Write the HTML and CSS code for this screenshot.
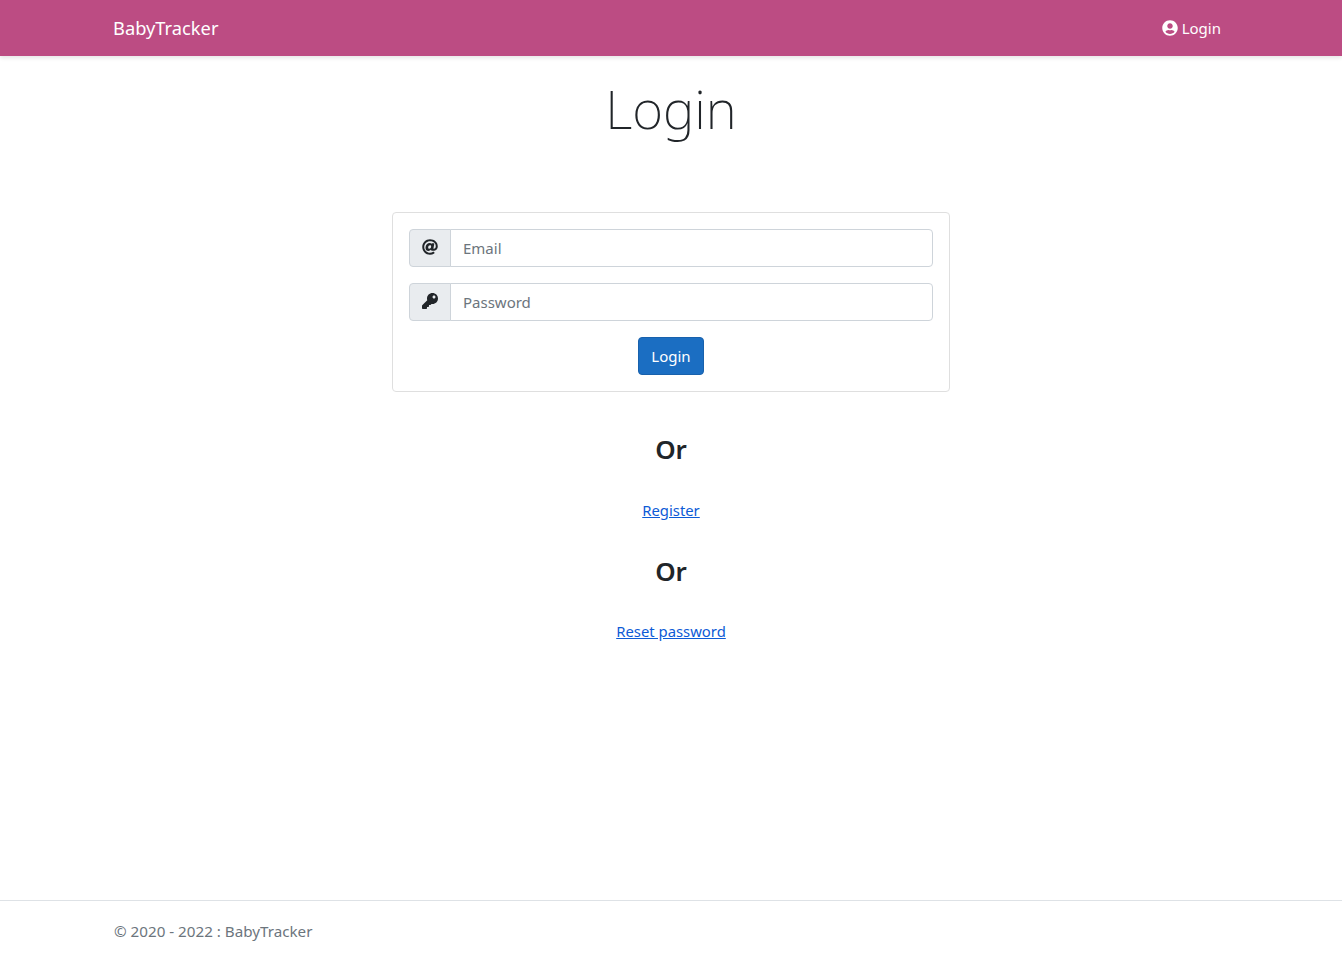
FILE: index.html
```html
<!DOCTYPE html>
<html lang="en">
<head>
<meta charset="utf-8">
<title>Login - BabyTracker</title>
<link rel="stylesheet" href="styles.css">
</head>
<body>
<nav class="navbar">
  <div class="container nav-inner">
    <a class="brand" href="#">BabyTracker</a>
    <a class="nav-link" href="#">
      <svg class="icon" viewBox="0 0 496 512" aria-hidden="true"><path d="M248 8C111 8 0 119 0 256s111 248 248 248 248-111 248-248S385 8 248 8zm0 96c48.6 0 88 39.4 88 88s-39.4 88-88 88-88-39.4-88-88 39.4-88 88-88zm0 344c-58.7 0-111.3-26.6-146.5-68.2 18.8-35.4 55.6-59.8 98.5-59.8 2.4 0 4.8.4 7.1 1.1 13 4.2 26.6 6.9 40.9 6.9 14.3 0 28-2.7 40.9-6.9 2.3-.7 4.7-1.1 7.1-1.1 42.9 0 79.7 24.4 98.5 59.8C359.3 421.4 306.7 448 248 448z"/></svg>
      Login
    </a>
  </div>
</nav>
<main class="main">
  <h1 class="title">Login</h1>
  <form class="card">
    <div class="input-group">
      <span class="addon"><svg class="icon" viewBox="0 0 512 512" aria-hidden="true"><path d="M256 8C118.941 8 8 118.919 8 256c0 137.059 110.919 248 248 248 48.154 0 95.342-14.14 135.408-40.223 12.005-7.815 14.625-24.288 5.552-35.372l-10.177-12.433c-7.671-9.371-21.179-11.667-31.373-5.129C325.92 429.757 291.314 440 256 440c-101.458 0-184-82.542-184-184S154.542 72 256 72c100.139 0 184 57.619 184 160 0 38.786-21.093 79.742-58.17 83.693-17.349-.454-16.91-12.857-13.476-30.024l23.433-121.11C394.653 149.75 383.308 136 368.225 136h-44.981a13.518 13.518 0 0 0-13.432 11.993l-.01.092c-14.697-17.901-40.448-21.775-59.971-21.775-74.58 0-137.831 62.234-137.831 151.46 0 65.303 36.785 105.87 96 105.87 26.984 0 57.369-15.637 74.991-38.333 9.522 34.104 40.613 34.103 70.71 34.103C462.609 379.41 504 307.798 504 232 504 95.653 394.023 8 256 8zm-21.68 304.43c-22.249 0-36.07-15.623-36.07-40.771 0-44.993 30.779-72.729 58.63-72.729 22.292 0 35.601 15.241 35.601 40.77 0 45.061-33.875 72.73-58.161 72.73z"/></svg></span>
      <input class="control" type="email" placeholder="Email">
    </div>
    <div class="input-group">
      <span class="addon"><svg class="icon" viewBox="0 0 512 512" aria-hidden="true"><path d="M512 176.001C512 273.203 433.202 352 336 352c-11.22 0-22.19-1.062-32.827-3.069l-24.012 27.014A23.999 23.999 0 0 1 261.223 384H224v40c0 13.255-10.745 24-24 24h-40v40c0 13.255-10.745 24-24 24H24c-13.255 0-24-10.745-24-24v-78.059c0-6.365 2.529-12.47 7.029-16.971l161.802-161.802C163.108 213.814 160 195.271 160 176 160 78.797 238.797.001 335.999 0 433.488-.001 512 78.511 512 176.001zM336 128c0 26.51 21.49 48 48 48s48-21.49 48-48-21.49-48-48-48-48 21.49-48 48z"/></svg></span>
      <input class="control" type="password" placeholder="Password">
    </div>
    <button class="btn" type="button">Login</button>
  </form>
  <h3 class="or or-first">Or</h3>
  <a class="link link-first" href="#">Register</a>
  <h3 class="or or-second">Or</h3>
  <a class="link link-second" href="#">Reset password</a>
</main>
<footer class="footer">
  <div class="container footer-text">© 2020 - 2022 : BabyTracker</div>
</footer>
</body>
</html>
```
FILE: styles.css
```css
* { box-sizing: border-box; }
html, body { height: 100%; }
body {
  margin: 0;
  min-height: 961px;
  display: flex;
  flex-direction: column;
  font-family: "Noto Sans", "Open Sans", sans-serif;
  font-size: 15px;
  line-height: 24px;
  color: #212529;
  background: #fff;
}
.container { width: 1140px; margin: 0 auto; padding: 0 12px; }
.navbar {
  height: 56px;
  flex: none;
  background: #bc4c83;
  box-shadow: 0 2px 4px rgba(0, 0, 0, .1);
}
.nav-inner { height: 100%; display: flex; align-items: center; justify-content: space-between; }
.brand { color: #fff; font-size: 18.3px; text-decoration: none; }
.nav-link { color: #fff; text-decoration: none; display: flex; align-items: center; gap: 4px; margin-right: 8px; font-size: 15px; }
.icon { width: 16px; height: 16px; fill: currentColor; display: block; }
.main { flex: 1; display: flex; flex-direction: column; align-items: center; }
.title { margin: 19px 0 70px; font-size: 53px; line-height: 67px; font-weight: 200; }
.card {
  width: 558px;
  padding: 16px;
  border: 1px solid #dfdfdf;
  border-radius: 4px;
  display: flex;
  flex-direction: column;
  align-items: center;
  gap: 16px;
}
.input-group { width: 100%; height: 38px; display: flex; }
.addon {
  width: 42px;
  display: flex;
  align-items: center;
  justify-content: center;
  padding-bottom: 3px;
  background: #e9ecef;
  border: 1px solid #ced4da;
  border-radius: 4px 0 0 4px;
}
.control {
  flex: 1;
  margin-left: -1px;
  padding: 6px 12px;
  border: 1px solid #ced4da;
  border-radius: 0 4px 4px 0;
  font: inherit;
  color: #212529;
  outline: none;
}
.control::placeholder { color: #6c757d; opacity: 1; }
.btn {
  width: 66px;
  height: 38px;
  padding: 0;
  color: #fff;
  background: #1b6ec2;
  border: 1px solid #1861ac;
  border-radius: 4px;
  font: inherit;
}
.or { margin: 0; font-size: 26px; line-height: 34px; font-weight: 600; }
.or-first { margin-top: 40px; }
.or-second { margin-top: 32px; }
.link { color: #0d5bd6; text-decoration: underline; font-size: 14.85px; }
.link-first { margin-top: 32px; }
.link-second { margin-top: 31px; }
.footer {
  height: 61px;
  flex: none;
  border-top: 1px solid #dee2e6;
  line-height: 60px;
  color: #6c757d;
}
.footer-text { font-size: 15.2px; padding-left: 13px; }
```
